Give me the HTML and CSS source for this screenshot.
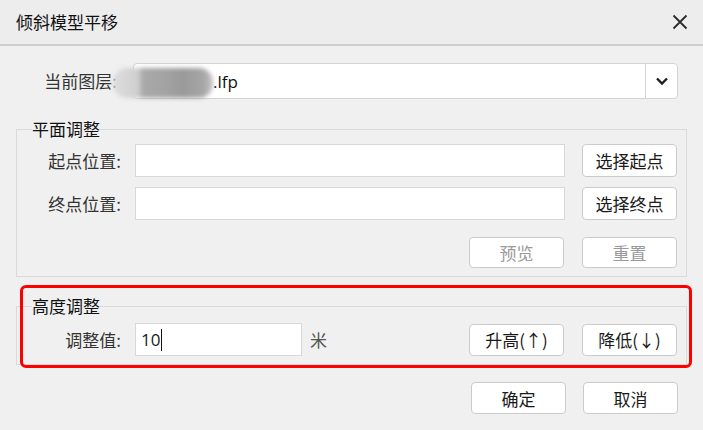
FILE: index.html
```html
<!DOCTYPE html>
<html lang="zh-CN">
<head>
  <meta charset="UTF-8">
  <title>倾斜模型平移</title>
  <link rel="stylesheet" href="styles.css">
</head>
<body>

<div class="titlebar">
  <span class="title">倾斜模型平移</span>
  <svg class="close" width="16" height="16" viewBox="0 0 16 16">
    <path d="M1.5 1.5 L14.5 14.5 M14.5 1.5 L1.5 14.5" stroke="#2b2b2b" stroke-width="1.8" fill="none"/>
  </svg>
</div>

<div class="content">
  <div class="row layer-row">
    <span class="label">当前图层:</span>
    <div class="combo">
      <div class="combo-value"><span class="redacted"></span>.lfp</div>
      <div class="combo-arrow">
        <svg width="14" height="10" viewBox="0 0 14 10">
          <path d="M2 2.5 L7 7.5 L12 2.5" stroke="#1e1e1e" stroke-width="2.4" fill="none"/>
        </svg>
      </div>
    </div>
  </div>

  <fieldset class="group plane">
    <legend>平面调整</legend>
    <div class="group-body">
      <div class="row">
        <span class="label">起点位置:</span>
        <div class="field wide"></div>
        <button class="btn">选择起点</button>
      </div>
      <div class="row">
        <span class="label">终点位置:</span>
        <div class="field wide"></div>
        <button class="btn">选择终点</button>
      </div>
      <div class="row actions">
        <button class="btn disabled">预览</button>
        <button class="btn disabled">重置</button>
      </div>
    </div>
  </fieldset>

  <div class="highlight-wrap">
    <fieldset class="group height">
      <legend>高度调整</legend>
      <div class="group-body">
        <div class="row">
          <span class="label">调整值:</span>
          <div class="field short">10<span class="caret"></span></div>
          <span class="unit">米</span>
          <button class="btn push">升高(↑)</button>
          <button class="btn">降低(↓)</button>
        </div>
      </div>
    </fieldset>
    <div class="highlight"></div>
  </div>

  <div class="row footer">
    <button class="btn">确定</button>
    <button class="btn">取消</button>
  </div>
</div>

</body>
</html>
```

FILE: styles.css
```css
body {
  margin: 0;
  background: #f0f0f0;
  font-family: "Noto Sans CJK SC", "Noto Sans", sans-serif;
  font-size: 17px;
  color: #222;
}

.titlebar {
  height: 44px;
  border-bottom: 2px solid #cfcfcf;
  background: #ededed;
  display: flex;
  align-items: center;
  justify-content: space-between;
  padding: 0 15px 0 16px;
}

.title {
  color: #111;
  line-height: 22px;
}

.content {
  padding: 0 16px;
}

.row {
  display: flex;
  align-items: center;
}

.label {
  width: 104px;
  text-align: right;
  color: #333;
  line-height: 22px;
  flex: none;
}

.layer-row {
  margin-top: 17px;
}

.layer-row .label {
  width: 101px;
  margin-right: 16px;
}

.combo {
  width: 545px;
  height: 36px;
  box-sizing: border-box;
  border: 1px solid #d4d4d4;
  border-radius: 4px;
  background: #fff;
  display: flex;
}

.combo-value {
  flex: 1;
  display: flex;
  align-items: center;
  font-family: "Open Sans", "Noto Sans", sans-serif;
  font-size: 17px;
  color: #111;
}

.redacted {
  display: inline-block;
  width: 100px;
  height: 30px;
  margin-left: -21px;
  margin-top: 4px;
  border-radius: 14px;
  background: linear-gradient(90deg, #dedede 0%, #cfcfcf 25%, #a9a9a9 30%, #a2a2a2 55%, #9a9a9a 70%, #a6a6a6 90%, #c4c4c4 100%);
  filter: blur(2px);
}

.combo-arrow {
  width: 31px;
  border-left: 1px solid #d4d4d4;
  display: flex;
  align-items: center;
  justify-content: center;
}

.group {
  margin: 0;
  padding: 0;
  border: 1px solid #dadada;
  min-width: 0;
}

.group legend {
  margin-left: 15px;
  padding: 0;
  line-height: 22px;
  color: #111;
}

.plane {
  margin-top: 19px;
}

.plane .group-body {
  padding: 4px 9px 8px 0;
  display: flex;
  flex-direction: column;
  gap: 10px;
}

.plane .label {
  width: 104px;
  margin-right: 14px;
}

.field {
  height: 33px;
  box-sizing: border-box;
  background: #fff;
  border: 1px solid #d8d8d8;
  display: flex;
  align-items: center;
  font-family: "Open Sans", "Noto Sans", sans-serif;
  font-size: 17px;
  color: #1a1a1a;
}

.field.wide {
  width: 430px;
  margin-right: 17px;
}

.field.short {
  width: 167px;
  padding-left: 5px;
}

.caret {
  display: inline-block;
  width: 1px;
  height: 22px;
  background: #111;
  margin-left: 1px;
}

.btn {
  width: 95px;
  height: 33px;
  box-sizing: border-box;
  background: #fff;
  border: 1px solid #cbcbcb;
  border-radius: 4px;
  font-family: "Noto Sans CJK SC", "Noto Sans", sans-serif;
  font-size: 17px;
  color: #1a1a1a;
  padding: 0;
  flex: none;
}

.btn.disabled {
  color: #9a9a9a;
}

.actions {
  justify-content: flex-end;
  gap: 18px;
  margin-top: 7px;
}

.actions .btn {
  height: 31px;
}

.highlight-wrap {
  position: relative;
  margin-top: 18px;
}

.height .group-body {
  padding: 6px 9px 8px 0;
}

.height .label {
  width: 104px;
  margin-right: 14px;
  padding-left: 20px;
  box-sizing: content-box;
  width: 84px;
}

.unit {
  margin-left: 8px;
  color: #555;
}

.height .btn {
  height: 32px;
}

.btn.push {
  margin-left: auto;
  margin-right: 18px;
}

.highlight {
  position: absolute;
  left: 4px;
  top: -10px;
  right: -5px;
  bottom: -3px;
  border: 3px solid #ff0000;
  border-radius: 6px;
  pointer-events: none;
}

.footer {
  justify-content: flex-end;
  gap: 17px;
  padding-right: 9px;
  margin-top: 17px;
}

.footer .btn {
  height: 32px;
}
```
